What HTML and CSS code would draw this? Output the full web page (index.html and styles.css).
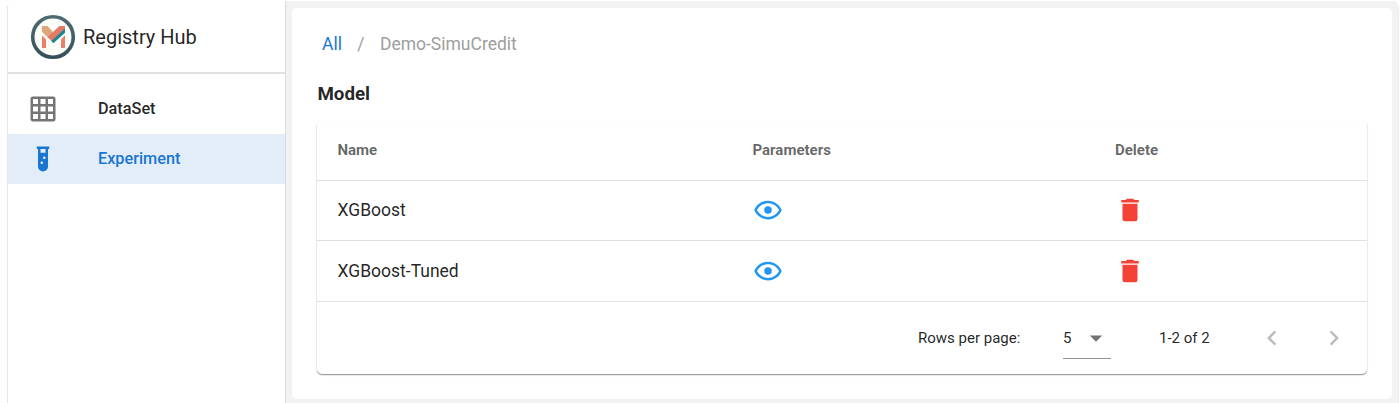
FILE: index.html
```html
<!DOCTYPE html>
<html lang="en">
<head>
<meta charset="utf-8">
<title>Registry Hub</title>
<link rel="stylesheet" href="styles.css">
</head>
<body>
<svg class="defs" width="0" height="0">
  <symbol id="eye" viewBox="0 0 24 24"><path d="M12,9A3,3 0 0,1 15,12A3,3 0 0,1 12,15A3,3 0 0,1 9,12A3,3 0 0,1 12,9M12,4.5C17,4.5 21.27,7.61 23,12C21.27,16.39 17,19.5 12,19.5C7,19.5 2.73,16.39 1,12C2.73,7.61 7,4.5 12,4.5M3.18,12C4.83,15.36 8.24,17.5 12,17.5C15.76,17.5 19.17,15.36 20.82,12C19.17,8.64 15.76,6.5 12,6.5C8.24,6.5 4.83,8.64 3.18,12Z"/></symbol>
  <symbol id="trash" viewBox="0 0 24 24"><path d="M19,4H15.5L14.5,3H9.5L8.5,4H5V6H19M6,19A2,2 0 0,0 8,21H16A2,2 0 0,0 18,19V7H6V19Z"/></symbol>
</svg>
<div class="app">
  <nav class="sidebar">
    <header class="brand">
      <svg class="logo" viewBox="0 0 46 46">
        <defs>
          <linearGradient id="ring" x1="0" y1="0" x2="0" y2="1"><stop offset="0" stop-color="#4d6b74"/><stop offset="1" stop-color="#35505a"/></linearGradient>
        </defs>
        <circle cx="23" cy="23" r="20.3" fill="#fbfcf7" stroke="url(#ring)" stroke-width="3.6"/>
        <path fill="#e8806c" d="M12 21.300l4 4.200V34H12zM35 21.300L31 25.500V34H35z"/>
        <path fill="#dba679" d="M12 12h5.500l5.500 6-4 6.500L12 17.700z"/>
        <path fill="#e57866" d="M29.500 12H35v3L23.500 26.500 23 28.500 17.500 23z"/>
        <path fill="#168a8c" d="M35 14.500v4.200L23.300 29.300l-2-2.300z"/>
      </svg>
      <span class="brand-name">Registry Hub</span>
    </header>
    <div class="menu">
      <a class="item"><svg class="icon" viewBox="0 0 24 24"><path d="M10,4V8H14V4H10M16,4V8H20V4H16M16,10V14H20V10H16M16,16V20H20V16H16M14,20V16H10V20H14M8,20V16H4V20H8M8,14V10H4V14H8M8,8V4H4V8H8M10,14H14V10H10V14M4,2H20A2,2 0 0,1 22,4V20A2,2 0 0,1 20,22H4C2.92,22 2,21.1 2,20V4A2,2 0 0,1 4,2Z"/></svg><span>DataSet</span></a>
      <a class="item active"><svg class="icon" viewBox="0 0 24 24"><path d="M7,2V4H8V18A4,4 0 0,0 12,22A4,4 0 0,0 16,18V4H17V2H7M11,16C10.4,16 10,15.6 10,15C10,14.4 10.4,14 11,14C11.6,14 12,14.4 12,15C12,15.6 11.6,16 11,16M13,12C12.4,12 12,11.6 12,11C12,10.4 12.4,10 13,10C13.6,10 14,10.4 14,11C14,11.6 13.6,12 13,12M14,7H10V4H14V7Z"/></svg><span>Experiment</span></a>
    </div>
  </nav>
  <main class="panel">
    <div class="crumbs"><a class="link">All</a><span class="slash">/</span><span>Demo-SimuCredit</span></div>
    <h1 class="title">Model</h1>
    <section class="card">
      <div class="row head"><span>Name</span><span>Parameters</span><span>Delete</span></div>
      <div class="row"><span>XGBoost</span><svg class="icon eye"><use href="#eye"/></svg><svg class="icon trash"><use href="#trash"/></svg></div>
      <div class="row last"><span>XGBoost-Tuned</span><svg class="icon eye"><use href="#eye"/></svg><svg class="icon trash"><use href="#trash"/></svg></div>
      <footer class="pager">
        <span class="rows-label">Rows per page:</span>
        <div class="select"><span>5</span><svg class="icon caret" viewBox="0 0 24 24"><path d="M7,10L12,15L17,10H7Z"/></svg></div>
        <span class="range">1-2 of 2</span>
        <svg class="icon chevron" viewBox="0 0 24 24"><path d="M15.41,16.58L10.83,12L15.41,7.41L14,6L8,12L14,18L15.41,16.58Z"/></svg>
        <svg class="icon chevron" viewBox="0 0 24 24"><path d="M8.59,16.58L13.17,12L8.59,7.41L10,6L16,12L10,18L8.59,16.58Z"/></svg>
      </footer>
    </section>
  </main>
</div>
</body>
</html>
```

FILE: styles.css
```css
* { box-sizing: border-box; }
body { margin: 0; height: 403px; overflow: hidden; padding: 1px 2px 0 8px; background: #fff; font-family: Roboto, sans-serif; color: rgba(0, 0, 0, .87); }
.defs { display: block; position: absolute; }
.app { display: flex; height: 410px; background: #f2f2f2; border-radius: 5px; box-shadow: 0 2px 2px rgba(0, 0, 0, .24); }
.sidebar { width: 278px; background: #fff; border-right: 1px solid #dcdcdc; border-radius: 5px 0 0; box-shadow: -1px 2px 0 #e8e8e8; }
.brand { display: flex; align-items: center; height: 73px; padding-left: 22px; border-bottom: 2px solid #e0e0e0; }
.logo { width: 46px; height: 46px; }
.brand-name { margin-left: 7px; font-size: 20px; line-height: 30px; }
.menu { padding-top: 10px; }
.item { display: flex; align-items: center; height: 50px; padding: 0 0 1px 20px; font-size: 16.25px; font-weight: 500; }
.item span { margin-left: 40px; }
.icon { width: 30px; height: 30px; display: block; fill: #757575; flex: none; }
.active { background: #e3edf7; color: #1976d2; }
.active .icon { fill: #1976d2; }
.panel { width: 1100px; height: 391px; margin: 7px 0 0 6px; padding: 0 25px; background: #fff; border-radius: 5px; }
.crumbs { display: flex; height: 72px; padding-left: 5px; align-items: center; font-size: 17.5px; color: #9e9e9e; }
.link { color: #1976d2; }
.slash { width: 38px; text-align: center; }
.title { height: 41px; margin: 0; padding-left: .4px; font-size: 18.75px; line-height: 28px; font-weight: 700; }
.card { height: 253px; border-radius: 5px; background: #fff; box-shadow: 0 1px 1px rgba(0, 0, 0, .3), 0 1px 2px rgba(0, 0, 0, .2); }
.row { display: grid; grid-template-columns: 415px 362.500px 1fr; align-items: center; height: 60px; padding: 0 20px 2px 20.5px; border-bottom: 1px solid #e0e0e0; font-size: 17.5px; }
.row.head { font-size: 15px; font-weight: 700; color: rgba(0, 0, 0, .6); }
.row.last { height: 61px; padding-bottom: 0; }
.eye { fill: #2196f3; }
.trash { fill: #f44336; }
.pager { display: flex; align-items: center; height: 72px; font-size: 15px; padding-left: 601px; }
.pager > * { flex: none; }
.rows-label { width: 145px; }
.select { display: flex; align-items: center; justify-content: space-between; width: 48px; height: 41px; border-bottom: 1px solid #949494; }
.range { width: 98px; margin-left: 48px; }
.chevron { fill: #bdbdbd; margin-right: 32px; }
```
